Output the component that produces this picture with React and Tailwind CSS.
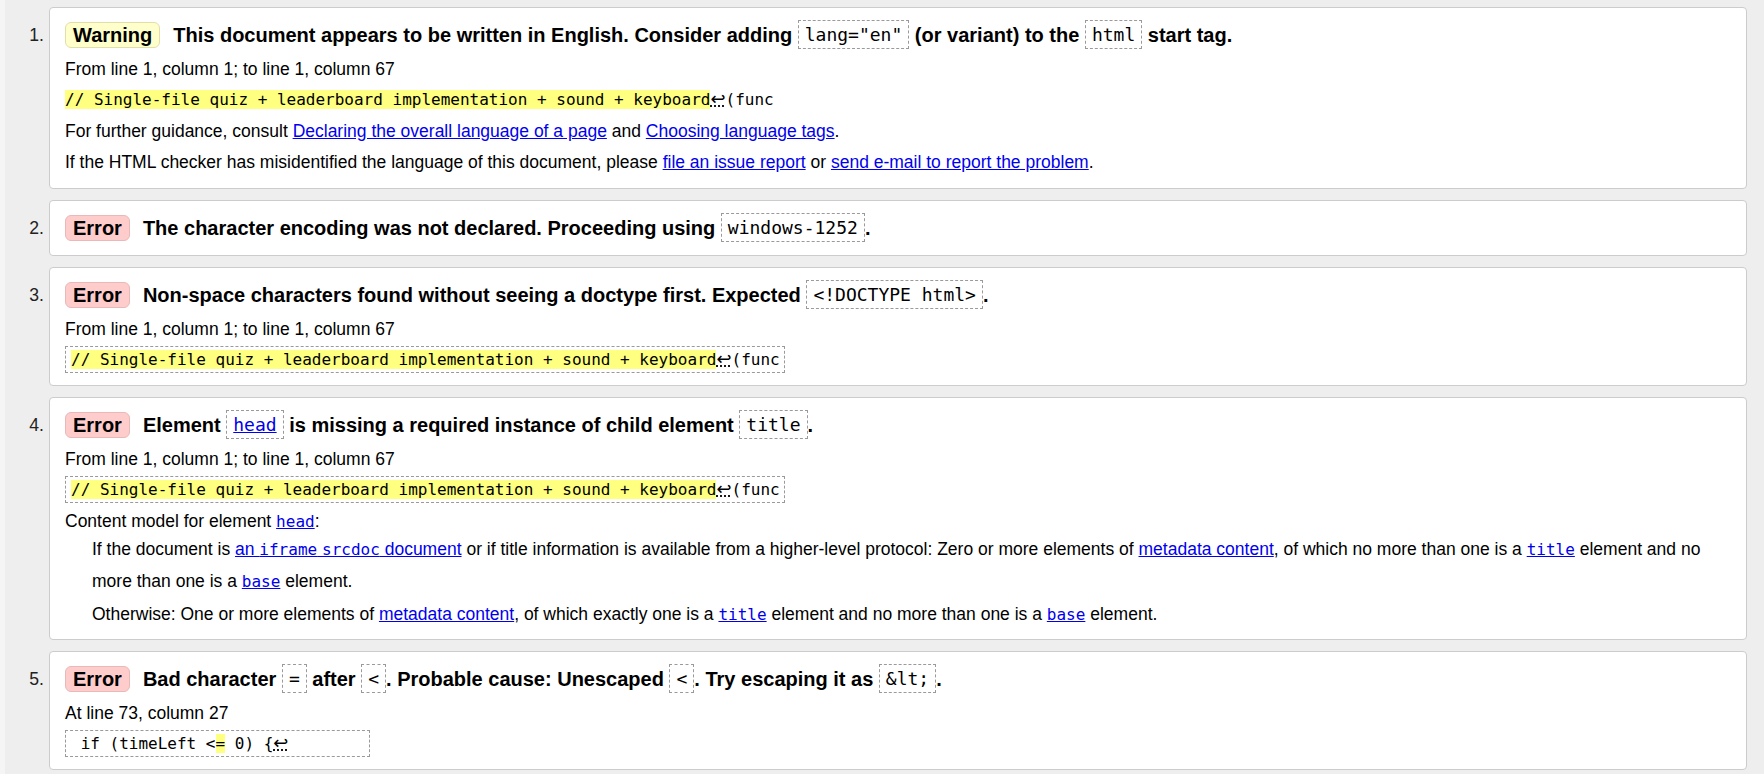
import React from "react";

const SANS = "font-[family-name:'Liberation_Sans',Arial,sans-serif]";
const MONO = "font-[family-name:'DejaVu_Sans_Mono',monospace]";

function TCode({ children, link }) {
  return (
    <span
      className={`inline-block align-top h-[29px] leading-[27px] px-[6px] border border-dashed border-[#9a9a9a] font-normal text-[18px] ${MONO} ${
        link ? "text-[#0000ee] underline" : "text-black"
      }`}
    >
      {children}
    </span>
  );
}

function Badge({ type }) {
  const cls =
    type === "Warning"
      ? "bg-[#ffffcc] border-[#e2dea8]"
      : "bg-[#ffcccc] border-[#e9b8b8]";
  return (
    <span
      className={`inline-block align-top mt-[2px] h-[26px] leading-[24px] px-[7px] mr-[13px] rounded-[6px] border ${cls}`}
    >
      {type}
    </span>
  );
}

function A({ children }) {
  return <a className="text-[#0000ee] underline cursor-pointer">{children}</a>;
}

function M({ children }) {
  return <code className={`${MONO} text-[16px] leading-[1]`}>{children}</code>;
}

function Mark({ children }) {
  return <mark className="bg-[#ffff80] text-black">{children}</mark>;
}

function Ret() {
  return (
    <span className="font-[family-name:'DejaVu_Sans',sans-serif] text-[18px] leading-[1] underline decoration-dotted">
      {"\u21A9"}
    </span>
  );
}

function Item({ n, type, title, children, pb = "pb-[12px]" }) {
  return (
    <div className="flex items-start">
      <div className="w-[39px] shrink-0 text-right pt-[13px] leading-[30px] text-[17.6px] text-[#222]">
        {n}.
      </div>
      <div
        className={`ml-[5px] flex-1 min-w-0 bg-white border border-[#cccccc] rounded-[4px] px-[15px] pt-[12px] ${pb}`}
      >
        <div className="text-[20px] font-bold leading-[30px] whitespace-nowrap text-black">
          <Badge type={type} />
          {title}
        </div>
        {children}
      </div>
    </div>
  );
}

function P({ children, mt = "mt-[5px]" }) {
  return <p className={`${mt} leading-[26px] text-[17.5px] text-black`}>{children}</p>;
}

function BoxCode({ children }) {
  return (
    <div className="mt-[4px] h-[27px]">
      <span
        className={`inline-block h-[27px] leading-[25px] border border-dashed border-[#9a9a9a] pl-[5px] pr-[4px] ${MONO} text-[16px] whitespace-pre text-black`}
      >
        {children}
      </span>
    </div>
  );
}

export default function App() {
  return (
    <div className={`flex min-h-[774px] w-full bg-[#eeeeee] ${SANS}`}>
      <div className="w-[5px] shrink-0 bg-[#f5f5f5]" />
      <div className="flex-1 min-w-0 pt-[7px] pr-[17px] flex flex-col gap-[11px]">
        <Item
          n={1}
          type="Warning"
          pb="pb-[13px]"
          title={
            <>
              This document appears to be written in English. Consider adding{" "}
              <TCode>lang="en"</TCode> (or variant) to the <TCode>html</TCode> start tag.
            </>
          }
        >
          <P mt="mt-[6px]">From line 1, column 1; to line 1, column 67</P>
          <div className={`mt-[4px] h-[27px] leading-[27px] text-[16px] ${MONO} whitespace-pre text-black`}>
            <Mark>// Single-file quiz + leaderboard implementation + sound + keyboard</Mark>
            <Ret />
            (func
          </div>
          <P>
            For further guidance, consult <A>Declaring the overall language of a page</A> and{" "}
            <A>Choosing language tags</A>.
          </P>
          <P>
            If the HTML checker has misidentified the language of this document, please{" "}
            <A>file an issue report</A> or <A>send e-mail to report the problem</A>.
          </P>
        </Item>

        <Item
          n={2}
          type="Error"
          title={
            <>
              The character encoding was not declared. Proceeding using <TCode>windows-1252</TCode>.
            </>
          }
        />

        <Item
          n={3}
          type="Error"
          title={
            <>
              Non-space characters found without seeing a doctype first. Expected{" "}
              <TCode>{"<!DOCTYPE html>"}</TCode>.
            </>
          }
        >
          <P mt="mt-[6px]">From line 1, column 1; to line 1, column 67</P>
          <BoxCode>
            <Mark>// Single-file quiz + leaderboard implementation + sound + keyboard</Mark>
            <Ret />
            (func
          </BoxCode>
        </Item>

        <Item
          n={4}
          type="Error"
          title={
            <>
              Element <TCode link>head</TCode> is missing a required instance of child element{" "}
              <TCode>title</TCode>.
            </>
          }
        >
          <P mt="mt-[6px]">From line 1, column 1; to line 1, column 67</P>
          <BoxCode>
            <Mark>// Single-file quiz + leaderboard implementation + sound + keyboard</Mark>
            <Ret />
            (func
          </BoxCode>
          <P>
            Content model for element{" "}
            <A>
              <M>head</M>
            </A>
            :
          </P>
          <div className="pl-[27px] mt-[-1px] leading-[32px] text-[17.5px] text-black">
            If the document is{" "}
            <A>
              an <M>iframe</M> <M>srcdoc</M> document
            </A>{" "}
            or if title information is available from a higher-level protocol: Zero or more elements of{" "}
            <A>metadata content</A>, of which no more than one is a{" "}
            <A>
              <M>title</M>
            </A>{" "}
            element and no more than one is a{" "}
            <A>
              <M>base</M>
            </A>{" "}
            element.
          </div>
          <p className="pl-[27px] mt-[4px] leading-[26px] text-[17.5px] text-black">
            Otherwise: One or more elements of <A>metadata content</A>, of which exactly one is a{" "}
            <A>
              <M>title</M>
            </A>{" "}
            element and no more than one is a{" "}
            <A>
              <M>base</M>
            </A>{" "}
            element.
          </p>
        </Item>

        <Item
          n={5}
          type="Error"
          title={
            <>
              Bad character <TCode>=</TCode> after <TCode>{"<"}</TCode>. Probable cause: Unescaped{" "}
              <TCode>{"<"}</TCode>. Try escaping it as <TCode>{"&lt;"}</TCode>.
            </>
          }
        >
          <P mt="mt-[6px]">At line 73, column 27</P>
          <BoxCode>
            {" if (timeLeft <"}
            <Mark>=</Mark>
            {" 0) {"}
            <Ret />
            {"        "}
          </BoxCode>
        </Item>
      </div>
    </div>
  );
}
